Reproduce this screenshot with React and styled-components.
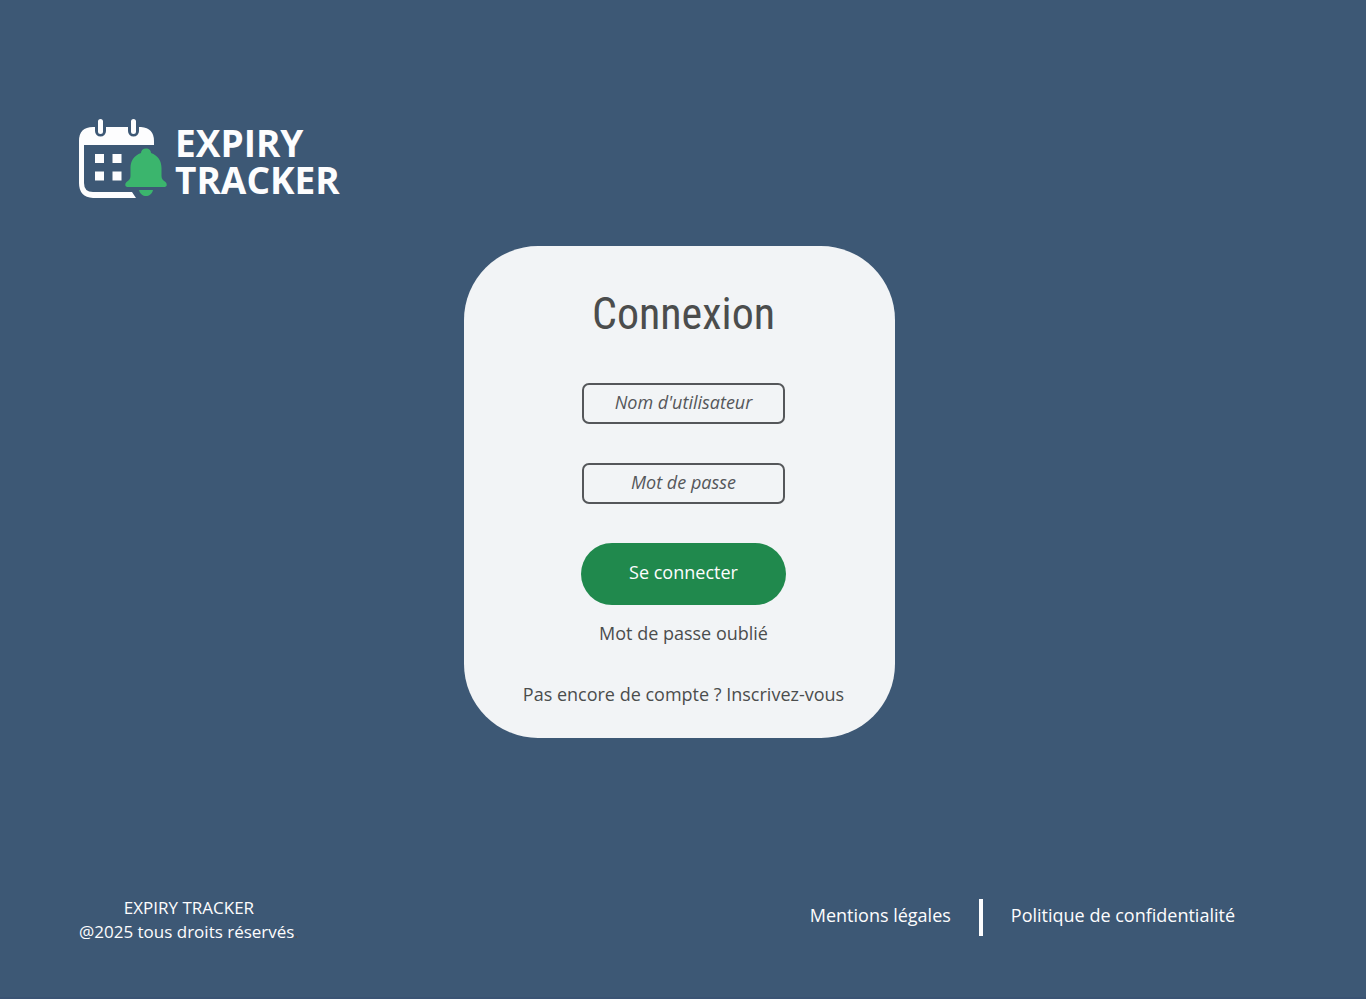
import React from "react";
import styled, { createGlobalStyle } from "styled-components";

const GlobalStyle = createGlobalStyle`
  *, *::before, *::after { box-sizing: border-box; }
  body {
    margin: 0;
    background: #3d5875;
    color: #fdfdfe;
    font-family: "Open Sans", "Noto Sans", sans-serif;
    font-size: 18px;
    line-height: 24px;
  }
`;

const Page = styled.div`
  min-height: 100vh;
  display: flex;
  flex-direction: column;
  border-bottom: 2px solid #3a5373;
`;

const Header = styled.header`
  padding: 119px 79px 0;
`;

const Brand = styled.a`
  display: inline-flex;
  align-items: center;
  gap: 8px;
  color: inherit;
  text-decoration: none;
  vertical-align: top;
`;

const LogoIcon = styled.svg`
  display: block;
  width: 88px;
  height: 80px;
`;

const BrandName = styled.span`
  padding-top: 4px;
  font-size: 37px;
  font-weight: 700;
  line-height: 37px;
`;

const Line = styled.span`
  display: block;
`;

const Main = styled.main`
  flex: 1;
  display: flex;
  justify-content: center;
  align-items: flex-start;
  padding: 47px 7px 47px 0;
`;

const Card = styled.form`
  width: 431px;
  max-width: 100%;
  display: flex;
  flex-direction: column;
  align-items: center;
  padding: 40px 0 32px 8px;
  border-radius: 74px;
  background: #f2f4f6;
  color: #4b4d4d;
`;

const Title = styled.h1`
  margin: 0 0 41px;
  font-family: "Roboto Condensed", Roboto, sans-serif;
  font-size: 44px;
  font-weight: 400;
  line-height: 56px;
`;

const Field = styled.input`
  width: 203px;
  height: 41px;
  margin: 0 0 39px;
  padding: 0 8px 4px;
  border: 2px solid #55575a;
  border-radius: 7px;
  background: transparent;
  color: inherit;
  font: inherit;
  font-style: italic;
  text-align: center;
  &::placeholder { color: #55575a; opacity: 1; }
`;

const Submit = styled.button`
  width: 205px;
  height: 62px;
  margin: 0 0 16px;
  padding: 0 0 4px;
  border: 0;
  border-radius: 31px;
  background: #20894d;
  color: #fdfdfe;
  font: inherit;
  cursor: pointer;
`;

const TextLink = styled.a`
  color: inherit;
  text-decoration: none;
`;

const SignUp = styled.p`
  margin: 37px 0 0;
`;

const Footer = styled.footer`
  display: flex;
  flex-wrap: wrap;
  justify-content: space-between;
  align-items: flex-start;
  gap: 24px;
  padding: 0 131px 53px 79px;
`;

const Copyright = styled.p`
  margin: 0;
  font-size: 17px;
  text-align: center;
`;

const Stop = styled.span`
  color: #55504f;
`;

const LegalNav = styled.nav`
  display: flex;
  align-items: flex-start;
  gap: 28px;
  padding-top: 3px;
  line-height: 32px;
`;

const Divider = styled.span`
  width: 4px;
  height: 37px;
  background: #fdfdfe;
`;

function Logo() {
  return (
    <LogoIcon viewBox="0 0 88 80" aria-hidden="true">
      <path
        d="M0 26V22Q0 8 14 8H16V12A5.500 5.500 0 0 0 27 12V8H49V12A5.500 5.500 0 0 0 60 12V8H62Q75 9 75 22V26H5V64Q5 73 14 73H53L57 79H14Q0 78 0 64Z"
        fill="#fdfdfe"
      />
      <path d="M21.500 2.500V12.500M54.500 2.500V12.500" stroke="#fdfdfe" strokeWidth="5" strokeLinecap="round" />
      <path d="M16 35h9v9h-9zM33.500 35h9v9h-9zM16 52.500h9v9h-9zM33.500 52.500h9v9h-9z" fill="#fdfdfe" />
      <path
        d="M67 29.500C70 29.500 72 31.500 72 34C79 36.500 82.500 42 82.500 49V57C82.500 60 84 61.500 86.500 63C88.500 65 88 68 85.500 68H48.500C46 68 45.500 65 47.500 63C50 61.500 51.500 60 51.500 57V49C51.500 42 55 36.500 62 34C62 31.500 64 29.500 67 29.500Z"
        fill="#3bb56d"
      />
      <path d="M60 71H74C73 75 70 77 67 77S61 75 60 71Z" fill="#3bb56d" />
    </LogoIcon>
  );
}

export default function App() {
  return (
    <>
      <GlobalStyle />
      <Page>
        <Header>
          <Brand href="#">
            <Logo />
            <BrandName>
              <Line>EXPIRY</Line>
              <Line>TRACKER</Line>
            </BrandName>
          </Brand>
        </Header>
        <Main>
          <Card onSubmit={(event) => event.preventDefault()}>
            <Title>Connexion</Title>
            <Field type="text" name="username" placeholder="Nom d'utilisateur" aria-label="Nom d'utilisateur" />
            <Field type="password" name="password" placeholder="Mot de passe" aria-label="Mot de passe" />
            <Submit type="submit">Se connecter</Submit>
            <TextLink href="#">Mot de passe oublié</TextLink>
            <SignUp>
              Pas encore de compte ? <TextLink href="#">Inscrivez-vous</TextLink>
            </SignUp>
          </Card>
        </Main>
        <Footer>
          <Copyright>
            <Line>EXPIRY TRACKER</Line>
            <Line>
              @2025 tous droits réservés<Stop>.</Stop>
            </Line>
          </Copyright>
          <LegalNav>
            <TextLink href="#">Mentions légales</TextLink>
            <Divider />
            <TextLink href="#">Politique de confidentialité</TextLink>
          </LegalNav>
        </Footer>
      </Page>
    </>
  );
}
